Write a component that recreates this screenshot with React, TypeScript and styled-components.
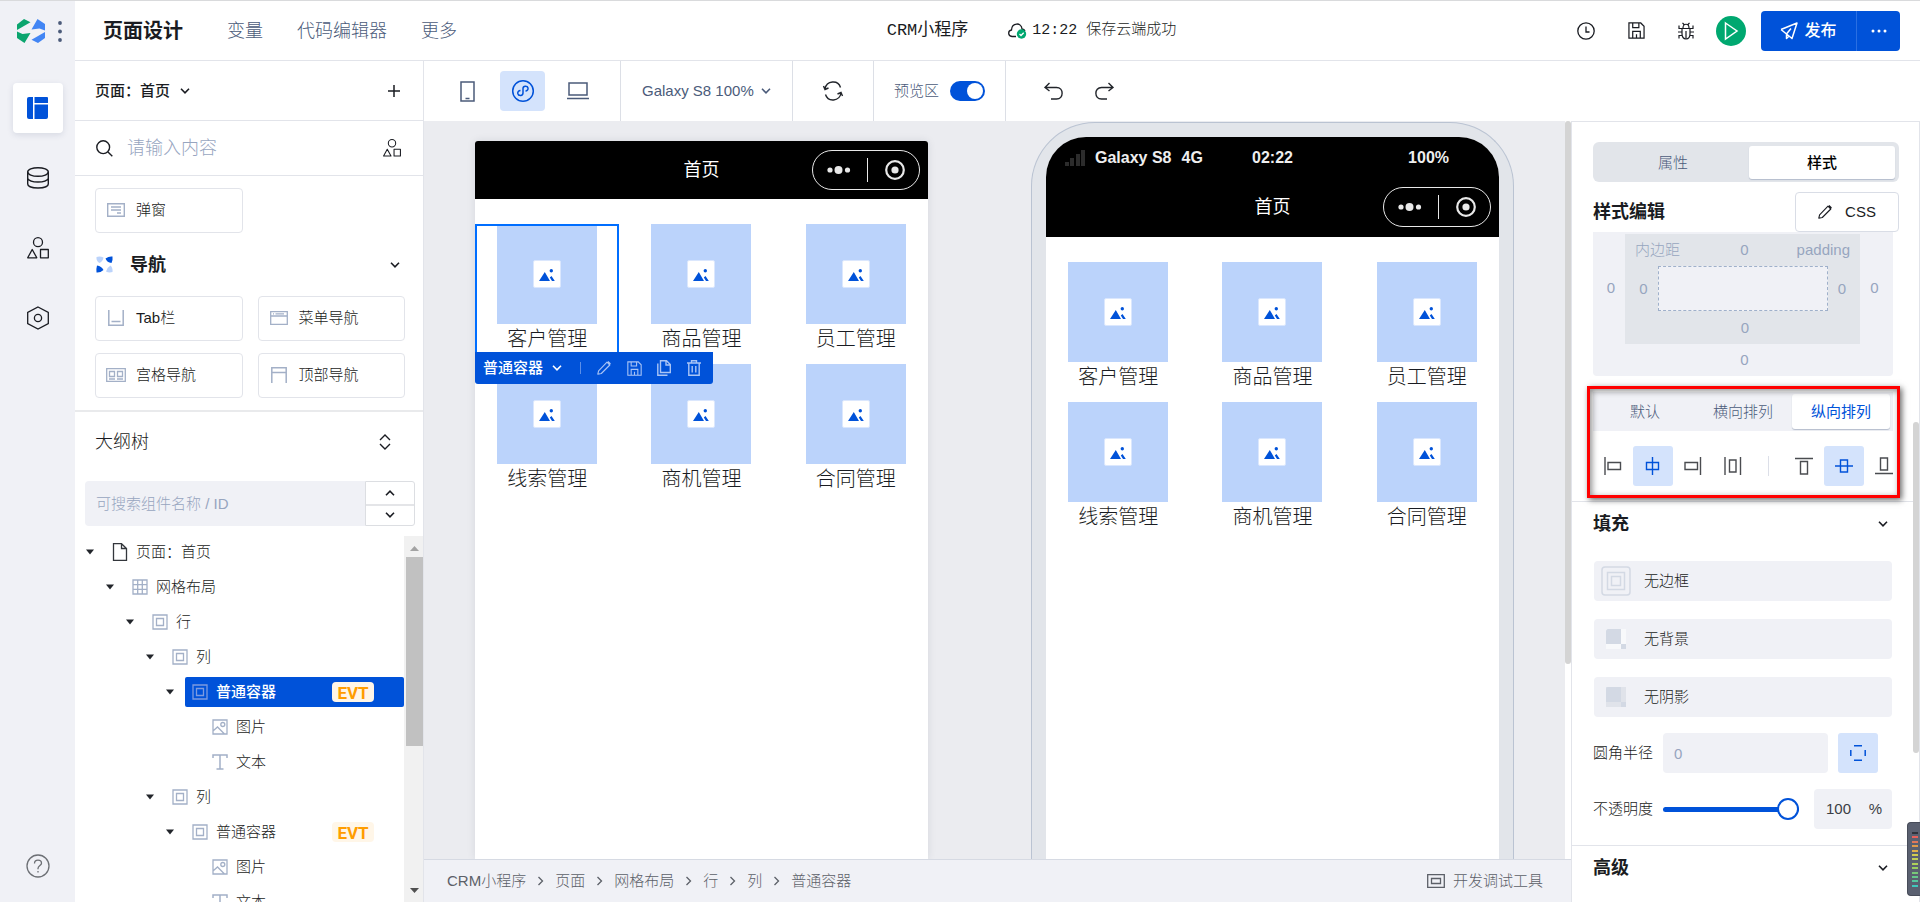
import React from "react";
import styled, { createGlobalStyle, css } from "styled-components";

const c = {
  ink: "#1a1c22",
  slate: "#4b5b7a",
  mute: "#97a5bf",
  iconMute: "#a3b0c7",
  line: "#e2e4ea",
  soft: "#f0f1f6",
  mid: "#e2e5ea",
  canvas: "#ebecf0",
  blue: "#0052d9",
  blueSoft: "#d4e3fc",
  tile: "#bbd3fb",
  green: "#00a870",
};

const GlobalStyle = createGlobalStyle`
  * { box-sizing: border-box; }
  body {
    margin: 0;
    font-family: "Liberation Sans", "Noto Sans CJK SC", sans-serif;
    font-size: 15px;
    line-height: 20px;
    font-weight: 300;
    color: ${c.ink};
    background: #fff;
  }
  button, input, select { font: inherit; color: inherit; margin: 0; }
  button { padding: 0; border: 0; background: none; cursor: pointer; }
  a { color: inherit; text-decoration: none; }
  ul { margin: 0; padding: 0; list-style: none; }
  h1, h2, h3 { margin: 0; font-size: 18px; line-height: 24px; }
`;

/* ---------- icons ---------- */

const Svg = styled.svg`
  display: block;
  flex: none;
  fill: none;
  stroke: currentColor;
  stroke-width: 1.3;
  overflow: visible;
`;

type IconProps = { w?: number; h?: number; sw?: number; children: React.ReactNode };
const Icon = ({ w = 24, h = 24, sw = 1.3, children }: IconProps) => (
  <Svg width={w} height={h} viewBox={`0 0 ${w} ${h}`} style={{ strokeWidth: sw }} aria-hidden="true">
    {children}
  </Svg>
);

const ChevronDown = () => (
  <Icon w={10} h={6} sw={1.6}><path d="M1 .8 5 4.8 9 .8" /></Icon>
);
const ChevronUp = () => (
  <Icon w={10} h={6} sw={1.6}><path d="M1 5.2 5 1.2 9 5.2" /></Icon>
);
const Crumb = () => (
  <Icon w={7} h={10} sw={1.3}><path d="M1.500 1 5.500 5 1.500 9" /></Icon>
);
const Logo = () => (
  <Icon w={28} h={24} sw={0}>
    <path fill="#0aa56e" d="M0 5.500 7 0 13.500 3.200 0 11z" />
    <path fill="#0aa56e" d="M0 12.500 5.500 15 13.500 14 7.500 24 0 19z" />
    <path fill="#4285f4" d="M20.500 0 28 5V11.500L22.500 9.500 14.500 10.500z" />
    <path fill="#4285f4" d="M28 13V19L21 24 14.500 20.800z" />
  </Icon>
);
const PagesIcon = () => (
  <Icon w={21} h={22} sw={0}>
    <path fill={c.blue} d="M2 0H6V22H2Q0 22 0 20V2Q0 0 2 0z" />
    <path fill={c.blue} d="M7.500 0H20Q21 0 21 1V6H7.500zM7.500 7.500H21V20Q21 22 19 22H7.500z" />
  </Icon>
);
const DatabaseIcon = () => (
  <Icon w={22} h={22} sw={1.4}>
    <ellipse cx="11" cy="5" rx="10.300" ry="4.300" />
    <path d="M.7 5V17C.7 19.500 5.500 21 11 21S21.300 19.500 21.300 17V5M.7 11.500C2 14 6 15 11 15S20 14 21.300 11.500" />
  </Icon>
);
const ShapesIcon = ({ size = 22 }: { size?: number }) => (
  <Svg width={size} height={size} viewBox="0 0 22 22" aria-hidden="true">
    <circle cx="11" cy="5.200" r="4.500" />
    <path d="M5.200 12.500 9.800 20.800H.7zM13.500 12.500H21.300V20.800H13.500z" strokeLinejoin="round" />
  </Svg>
);
const HexIcon = () => (
  <Icon w={22} h={24}>
    <path d="M11 1 21.300 6.500V17.500L11 23 .7 17.500V6.500z" />
    <circle cx="11" cy="12" r="3.600" />
  </Icon>
);
const HelpIcon = () => (
  <Icon w={24} h={24}>
    <circle cx="12" cy="12" r="11" />
    <path d="M8.500 9.500C8.500 7.500 10 6.200 12 6.200S15.500 7.500 15.500 9.300C15.500 11.500 12 11.800 12 14.500V15.200M12 17V18.600" />
  </Icon>
);
const SearchIcon = () => (
  <Icon w={17} h={17} sw={1.4}><circle cx="7.200" cy="7.200" r="6.400" /><path d="M12 12 16.300 16.300" /></Icon>
);
const PlusIcon = () => (
  <Icon w={12} h={12} sw={1.5}><path d="M6 0V12M0 6H12" /></Icon>
);
const PencilIcon = ({ size = 14 }: { size?: number }) => (
  <Svg width={size} height={size} viewBox="0 0 14 14" aria-hidden="true">
    <path d="M.8 13.200 1.600 9.800 10 1.200 12.800 4 4.300 12.500zM11 .5 13.500 3" strokeLinejoin="round" strokeWidth="1.100" />
  </Svg>
);
const SaveIcon = ({ size = 18 }: { size?: number }) => (
  <Svg width={size} height={size} viewBox="0 0 18 18" aria-hidden="true">
    <path d="M1 1H13.500L17 4.500V17H1zM5 1V6H11.500V1M5 17V10H13V17M9 13V17" />
  </Svg>
);
const TrashIcon = () => (
  <Icon w={14} h={16} sw={1.4}><path d="M0 3H14M4.500 3V.8H9.500V3M1.800 3V15.200H12.200V3M5.200 6V12.500M8.800 6V12.500" /></Icon>
);
const CopyIcon = () => (
  <Icon w={14} h={16} sw={1.4}><path d="M3.500 .8H9.500L13.300 4.600V12.500H3.500zM9 .8V5H13.300M.8 3.500V15.200H10.500" /></Icon>
);
const PictureGlyph = () => (
  <Icon w={16} h={12} sw={0}>
    <path fill={c.blue} d="M0 12 5.800 3 11 12zM10.800 8.500 12.500 7 15.800 12H13z" />
    <circle cx="12.300" cy="1.700" r="1.700" fill={c.blue} />
  </Icon>
);

const treeIcons = {
  page: <Icon w={16} h={18}><path d="M1.500 .7H9.500L14.500 5.500V17.300H1.500zM9.500 .7V5.500H14.500" /></Icon>,
  grid: <Icon w={16} h={16}><path d="M1 1H15V15H1zM1 5.700H15M1 10.300H15M5.700 1V15M10.300 1V15" /></Icon>,
  box: <Icon w={16} h={16}><path d="M1 1H15V15H1zM4.500 4.500H11.500V11.500H4.500z" /></Icon>,
  image: <Icon w={16} h={16}><path d="M1 1H15V15H1zM1 12 5.500 8 12.500 15" /><circle cx="10.800" cy="5.500" r="2" /></Icon>,
  text: <Icon w={16} h={16} sw={1.5}><path d="M1 4V1H15V4M8 1V15M4.500 15H11.500" /></Icon>,
};

/* ---------- shell ---------- */

const Shell = styled.div`
  display: flex;
  height: 100vh;
  overflow: hidden;
  border-top: 1px solid #d9dadc;
`;
const Rail = styled.nav`
  flex: none;
  width: 75px;
  background: ${c.soft};
  display: flex;
  flex-direction: column;
  align-items: center;
`;
const RailTop = styled.div`
  align-self: stretch;
  height: 82px;
  padding: 18px 0 0 17px;
  display: flex;
  align-items: flex-start;
  gap: 13px;
  color: ${c.slate};
`;
const RailButton = styled.button<{ $active?: boolean }>`
  width: 50px;
  height: 50px;
  margin-bottom: 20px;
  display: grid;
  place-items: center;
  border-radius: 4px;
  ${(p) => p.$active && css`background: #fff; box-shadow: 0 2px 6px rgba(30, 50, 90, 0.12);`}
`;
const RailHelp = styled(RailButton)`
  margin-top: auto;
  margin-bottom: 11px;
  color: #6d7075;
`;
const Main = styled.div`
  flex: 1;
  min-width: 0;
  display: flex;
  flex-direction: column;
`;
const Header = styled.header`
  flex: none;
  height: 60px;
  padding: 0 20px 0 28px;
  border-bottom: 1px solid ${c.line};
  display: grid;
  grid-template-columns: 1fr auto 1fr;
  align-items: center;
`;
const HeaderNav = styled.div`
  display: flex;
  align-items: center;
  gap: 34px;
  font-size: 18px;
  color: ${c.slate};
`;
const PageTitle = styled.h1`
  margin-right: 10px;
  font-size: 20px;
  color: ${c.ink};
`;
const Project = styled.div`
  padding-left: 60px;
  display: flex;
  align-items: center;
  gap: 40px;
  font-family: "Liberation Mono", "Noto Sans CJK SC", monospace;
`;
const ProjectName = styled.strong`
  font-size: 17px;
`;
const SaveState = styled.span`
  display: flex;
  align-items: center;
  gap: 5px;
  font-size: 15px;
`;
const HeaderTools = styled.div`
  display: flex;
  justify-content: flex-end;
  align-items: center;
`;
const ToolButton = styled.button`
  width: 50px;
  height: 40px;
  display: grid;
  place-items: center;
`;
const RunButton = styled.button`
  width: 30px;
  height: 30px;
  margin: 0 15px 0 5px;
  display: grid;
  place-items: center;
  border-radius: 50%;
  background: ${c.green};
  color: #fff;
`;
const Publish = styled.div`
  display: flex;
  height: 40px;
  background: ${c.blue};
  color: #fff;
  border-radius: 4px;
`;
const PublishMain = styled.button`
  width: 96px;
  display: flex;
  align-items: center;
  justify-content: center;
  gap: 6px;
  font-size: 16px;
  font-weight: 500;
  border-right: 1px solid #2a6fe2;
`;
const PublishMore = styled.button`
  width: 43px;
  display: grid;
  place-items: center;
`;

const Body = styled.div`
  flex: 1;
  min-height: 0;
  display: flex;
`;

/* ---------- left panel ---------- */

const LeftPanel = styled.aside`
  flex: none;
  width: 349px;
  border-right: 1px solid ${c.line};
  display: flex;
  flex-direction: column;
`;
const PageBar = styled.div`
  flex: none;
  height: 60px;
  padding: 0 23px 0 20px;
  border-bottom: 1px solid ${c.line};
  display: flex;
  align-items: center;
  justify-content: space-between;
`;
const PagePicker = styled.button`
  display: flex;
  align-items: center;
  gap: 10px;
  font-weight: 500;
`;
const SearchBar = styled.label`
  flex: none;
  height: 55px;
  padding: 0 22px 0 21px;
  border-bottom: 1px solid ${c.line};
  display: flex;
  align-items: center;
  gap: 14px;
`;
const SearchInput = styled.input`
  flex: 1;
  min-width: 0;
  border: 0;
  outline: 0;
  padding: 0;
  background: none;
  font-size: 18px;
  &::placeholder { color: ${c.mute}; opacity: 1; }
`;
const Library = styled.section`
  flex: none;
  height: 236px;
  padding: 12px 18px 0 20px;
  border-bottom: 2px solid #e9eaec;
  overflow: hidden;
`;
const Tiles = styled.div`
  display: grid;
  grid-template-columns: 1fr 1fr;
  gap: 12px 15px;
`;
const Tile = styled.button`
  height: 45px;
  padding: 0 0 2px 10px;
  display: flex;
  align-items: center;
  gap: 10px;
  border: 1px solid ${c.line};
  border-radius: 4px;
`;
const TileIcon = styled.span`
  width: 20px;
  display: grid;
  place-items: center;
  color: ${c.iconMute};
`;
const LibraryHead = styled.div`
  height: 63px;
  padding: 0 5px 0 1px;
  display: flex;
  align-items: center;
  gap: 17px;
  & > :last-child { margin-left: auto; }
`;
const OutlineHead = styled.div`
  flex: none;
  height: 69px;
  padding: 0 32px 9px 20px;
  display: flex;
  align-items: center;
  justify-content: space-between;
`;
const OutlineTitle = styled.h2`
  font-weight: 300;
`;
const OutlineSearch = styled.div`
  flex: none;
  margin: 0 8px 10px 10px;
  display: flex;
  height: 45px;
`;
const OutlineInput = styled.input`
  flex: 1;
  min-width: 0;
  padding: 1px 11px 0;
  border: 0;
  outline: 0;
  background: ${c.soft};
  border-radius: 4px 0 0 4px;
  &::placeholder { color: ${c.mute}; opacity: 1; }
`;
const Stepper = styled.div`
  width: 50px;
  display: grid;
  grid-template-rows: 1fr 1fr;
  border: 1px solid #dcdee2;
  border-radius: 0 3px 3px 0;
`;
const StepButton = styled.button`
  display: grid;
  place-items: center;
  & + & { border-top: 2px solid #e4e5e8; }
`;
const TreeArea = styled.div`
  flex: 1;
  min-height: 0;
  display: flex;
`;
const Tree = styled.ul`
  flex: 1;
  min-width: 0;
  padding-top: 1px;
  overflow: hidden;
`;
const TreeRow = styled.li<{ $level: number }>`
  height: 35px;
  padding-left: ${(p) => 10 + p.$level * 20}px;
  display: flex;
  align-items: flex-start;
`;
const Caret = styled.span`
  flex: none;
  width: 20px;
  height: 30px;
  padding: 12px 0 0 1px;
`;
const TreeNode = styled.button<{ $active?: boolean; $dark?: boolean }>`
  flex: 1;
  min-width: 0;
  height: 30px;
  padding: 0 30px 0 7px;
  display: flex;
  align-items: center;
  gap: 8px;
  border-radius: 2px;
  & > svg { color: ${(p) => (p.$dark ? "#33363c" : c.iconMute)}; }
  ${(p) => p.$active && css`background: ${c.blue}; color: #fff; font-weight: 500; & > svg { color: #7c9be0; }`}
`;
const Badge = styled.span`
  width: 42px;
  height: 20px;
  margin-left: auto;
  border-radius: 4px;
  background: #fff6e8;
  color: #ff9d00;
  font: bold 17px/22px Roboto, sans-serif;
  text-align: center;
`;
const TreeScroll = styled.div`
  width: 19px;
  padding: 0 0 6px 2px;
  background: #f1f1f1;
  display: flex;
  flex-direction: column;
  align-items: center;
`;
const TreeThumb = styled.div`
  align-self: stretch;
  height: 189px;
  margin: 6px 0 auto;
  background: #c1c1c1;
`;

/* ---------- workspace ---------- */

const Workspace = styled.div`
  flex: 1;
  min-width: 0;
  display: flex;
  flex-direction: column;
`;
const Toolbar = styled.div`
  flex: none;
  height: 60px;
  padding-left: 1px;
  display: flex;
  color: ${c.slate};
`;
const ToolGroup = styled.div<{ $gap?: number; $pad: number; $last?: boolean }>`
  padding: 0 ${(p) => p.$pad}px;
  display: flex;
  align-items: center;
  gap: ${(p) => p.$gap ?? 0}px;
  border-right: ${(p) => (p.$last ? "0" : `1px solid #dcdfe6`)};
`;
const DeviceButton = styled.button<{ $active?: boolean }>`
  width: 45px;
  height: 40px;
  display: grid;
  place-items: center;
  border-radius: 4px;
  ${(p) => p.$active && css`background: ${c.blueSoft}; color: ${c.blue};`}
`;
const DeviceSelect = styled.select`
  appearance: none;
  border: 0;
  padding: 0;
  background: none;
`;
const Plain = styled.button`
  width: 20px;
  height: 40px;
  display: grid;
  place-items: center;
  color: #22252b;
`;
const Switch = styled.input`
  appearance: none;
  width: 35px;
  height: 20px;
  padding: 2px;
  border-radius: 10px;
  background: ${c.blue};
  display: flex;
  justify-content: flex-end;
  &::before {
    content: "";
    width: 16px;
    height: 16px;
    border-radius: 50%;
    background: #fff;
  }
`;
const SwitchLabel = styled.label`
  display: flex;
  align-items: center;
  gap: 11px;
`;
const Lower = styled.div`
  flex: 1;
  min-height: 0;
  display: flex;
`;
const Stage = styled.main`
  flex: 1;
  min-width: 0;
  display: flex;
  flex-direction: column;
`;
const CanvasArea = styled.div`
  flex: 1;
  min-height: 0;
  display: flex;
`;
const Canvas = styled.div`
  flex: 1;
  min-width: 0;
  padding: 0 51px;
  display: flex;
  justify-content: space-between;
  align-items: stretch;
  background: ${c.canvas};
  overflow: hidden;
`;
const CanvasScroll = styled.div`
  width: 6px;
`;
const CanvasThumb = styled.div`
  height: 543px;
  border-radius: 3px;
  background: #d4d4d4;
`;
const EditPhone = styled.section`
  width: 453px;
  margin-top: 20px;
  border-radius: 3px 3px 0 0;
  background: #fff;
  box-shadow: 0 0 8px rgba(30, 40, 60, 0.1);
`;
const NavBar = styled.div<{ $tall?: boolean }>`
  height: ${(p) => (p.$tall ? 60 : 58)}px;
  padding: 0 8px;
  display: grid;
  grid-template-columns: 1fr auto 1fr;
  align-items: center;
  background: #000;
  color: #fff;
  border-radius: ${(p) => (p.$tall ? "0" : "3px 3px 0 0")};
`;
const NavTitle = styled.span`
  grid-column: 2;
  font-size: 18px;
  font-weight: 400;
`;
const Capsule = styled.div`
  justify-self: end;
  width: 108px;
  height: 40px;
  padding: 0 14px;
  display: flex;
  align-items: center;
  justify-content: space-between;
  border: 1px solid #e8e8e8;
  border-radius: 20px;
  color: #e8e8e8;
`;
const Cells = styled.div`
  padding-top: 25px;
  display: grid;
  grid-template-columns: repeat(3, 1fr);
  gap: 10px;
`;
const Cell = styled.figure`
  position: relative;
  margin: 0;
  display: flex;
  flex-direction: column;
  align-items: center;
  font-size: 20px;
  line-height: 30px;
`;
const Picture = styled.div`
  width: 100px;
  height: 100px;
  display: grid;
  place-items: center;
  background: ${c.tile};
`;
const PictureChip = styled.span`
  width: 28px;
  height: 28px;
  padding-top: 1px;
  display: grid;
  place-items: center;
  background: #fff;
  border: 1px solid #dbe7fd;
  border-radius: 2px;
`;
const Selection = styled.div`
  position: absolute;
  inset: 0;
  border: 2px solid #006eff;
`;
const QuickBar = styled.div`
  position: absolute;
  z-index: 1;
  top: 128px;
  left: 0;
  height: 32px;
  padding: 0 4px 0 8px;
  display: flex;
  align-items: center;
  background: ${c.blue};
  color: #fff;
  border-radius: 0 0 3px 3px;
  font-size: 15px;
  line-height: 20px;
`;
const QuickName = styled.button`
  display: flex;
  align-items: center;
  gap: 9px;
  white-space: nowrap;
  font-weight: 500;
`;
const QuickRule = styled.span`
  width: 1px;
  height: 12px;
  margin: 0 8px 0 18px;
  background: #5c8fe8;
`;
const QuickButton = styled.button`
  width: 30px;
  height: 32px;
  display: grid;
  place-items: center;
  color: #a9c4f5;
`;
const DeviceFrame = styled.section`
  width: 483px;
  margin-top: 1px;
  padding: 14px 14px 0;
  border: 1px solid #bac3d2;
  border-bottom: 0;
  border-radius: 64px 64px 0 0;
  background: ${c.mid};
`;
const Screen = styled.div`
  height: 100%;
  border-radius: 40px 40px 0 0;
  overflow: hidden;
  background: #fff;
`;
const StatusBar = styled.div`
  height: 40px;
  padding: 2px 50px 0 19px;
  display: grid;
  grid-template-columns: 1fr auto 1fr;
  align-items: center;
  background: #000;
  color: #eee;
  font-size: 16px;
  font-weight: 700;
  & > :last-child { justify-self: end; }
`;
const Carrier = styled.span`
  display: flex;
  align-items: center;
  gap: 10px;
`;
const StatusText = styled.span`
  padding-left: 31px;
`;
const Footer = styled.footer`
  flex: none;
  height: 43px;
  padding: 0 28px 0 23px;
  border-top: 1px solid #d6dae3;
  background: ${c.soft};
  display: flex;
  align-items: center;
  justify-content: space-between;
  color: #5c6068;
`;
const Crumbs = styled.nav`
  display: flex;
  align-items: center;
  gap: 11px;
`;
const DevTools = styled.button`
  display: flex;
  align-items: center;
  gap: 8px;
`;

/* ---------- inspector ---------- */

const Inspector = styled.aside`
  flex: none;
  width: 349px;
  border: 1px solid ${c.line};
  border-bottom: 0;
  display: flex;
`;
const InspectorBody = styled.div`
  flex: 1;
  min-width: 0;
  padding-top: 20px;
`;
const Pad = styled.div`
  padding: 0 14px 0 21px;
`;
const MainTabs = styled.div`
  height: 40px;
  padding: 4px 4px 3px;
  display: grid;
  grid-template-columns: 1fr 146px;
  background: ${c.mid};
  border-radius: 6px;
`;
const Tab = styled.button<{ $active?: boolean; $blue?: boolean }>`
  border-radius: 3px;
  color: ${c.slate};
  ${(p) =>
    p.$active &&
    css`
      background: #fff;
      color: ${p.$blue ? c.blue : "#000"};
      font-weight: ${p.$blue ? 400 : 500};
      box-shadow: 0 1px 1px #b4bccc;
    `}
`;
const EditHead = styled.div`
  margin-top: 10px;
  height: 40px;
  display: flex;
  align-items: center;
  justify-content: space-between;
`;
const CssButton = styled.button`
  width: 104px;
  height: 40px;
  display: flex;
  align-items: center;
  justify-content: center;
  gap: 13px;
  border: 1px solid #d9dde6;
  border-radius: 4px;
  background: #fff;
`;
const MarginBox = styled.div`
  width: 300px;
  height: 144px;
  display: grid;
  grid-template: 112px 32px / 32px 1fr 33px;
  place-items: center;
  background: ${c.soft};
  border-radius: 0 0 4px 4px;
  color: ${c.mute};
`;
const PaddingBox = styled.div`
  align-self: end;
  justify-self: stretch;
  height: 110px;
  display: grid;
  grid-template: 32px 45px 33px / 33px 1fr 32px;
  place-items: center;
  background: ${c.mid};
`;
const PaddingHead = styled.div`
  grid-column: 1 / -1;
  justify-self: stretch;
  padding: 0 10px;
  display: grid;
  grid-template-columns: 1fr auto 1fr;
  & > :last-child { text-align: right; }
`;
const Content = styled.div`
  place-self: stretch;
  border: 1px dashed #9fb0ca;
  background: ${c.soft};
`;
const BoxValue = styled.span<{ $side: "left" | "right" | "bottom" }>`
  ${(p) => (p.$side === "right" ? "padding-right: 4px;" : "padding-left: 4px;")}
  ${(p) => p.$side === "bottom" && "grid-column: 2;"}
`;
const Arrange = styled.div`
  position: relative;
  width: 300px;
  margin-top: 16px;
`;
const ArrangeTabs = styled.div`
  height: 39px;
  padding: 2px 3px;
  display: grid;
  grid-template-columns: repeat(3, 1fr);
  background: ${c.soft};
`;
const AlignRow = styled.div`
  margin-top: 15px;
  display: flex;
  align-items: center;
`;
const AlignButton = styled.button<{ $active?: boolean }>`
  flex: none;
  width: 40px;
  height: 40px;
  display: grid;
  place-items: center;
  border-radius: 3px;
  color: #4a4c50;
  ${(p) => p.$active && css`background: ${c.blueSoft}; color: ${c.blue};`}
`;
const AlignRule = styled.span`
  flex: none;
  width: 1px;
  height: 20px;
  margin: 0 15px;
  background: #dcdfe8;
`;
const Callout = styled.div`
  position: absolute;
  inset: -6px -7px -12px -6px;
  border: 3px solid #f00;
  pointer-events: none;
  box-shadow: 2px 2px 6px rgba(0, 0, 0, 0.6), inset 2px 2px 6px rgba(0, 0, 0, 0.45);
`;
const GroupHead = styled.div<{ $top: number; $h: number }>`
  margin-top: ${(p) => p.$top}px;
  height: ${(p) => p.$h}px;
  padding: 0 25px 0 21px;
  border-top: 1px solid ${c.line};
  display: flex;
  align-items: center;
  justify-content: space-between;
`;
const FillRows = styled.div`
  padding: 16px 21px 0 22px;
  display: grid;
  gap: 18px;
`;
const FillRow = styled.button`
  height: 40px;
  padding-left: 7px;
  display: flex;
  align-items: center;
  gap: 13px;
  background: ${c.soft};
  border-radius: 4px;
`;
const FillIcon = styled.span`
  width: 30px;
  height: 30px;
  display: grid;
  place-items: center;
  color: #d3d9e4;
`;
const Field = styled.div`
  margin-top: 16px;
  padding: 0 21px 0 21px;
  height: 40px;
  display: flex;
  align-items: center;
  gap: 10px;
`;
const RadiusInput = styled.input`
  width: 165px;
  height: 40px;
  padding: 0 11px;
  border: 0;
  border-radius: 4px;
  background: ${c.soft};
  color: ${c.mute};
`;
const Range = styled.input`
  appearance: none;
  width: 136px;
  height: 22px;
  background: none;
  &::-webkit-slider-runnable-track {
    height: 5px;
    border-radius: 3px;
    background: ${c.blue};
  }
  &::-webkit-slider-thumb {
    appearance: none;
    width: 22px;
    height: 22px;
    margin-top: -9px;
    border: 2px solid ${c.blue};
    border-radius: 50%;
    background: #fff;
  }
`;
const Percent = styled.label`
  width: 78px;
  height: 40px;
  margin-left: auto;
  padding: 0 10px 0 12px;
  display: flex;
  align-items: center;
  justify-content: space-between;
  background: ${c.soft};
  border-radius: 4px;
  color: #3b3e45;
`;
const PercentInput = styled.input`
  width: 36px;
  padding: 0;
  border: 0;
  background: none;
`;
const InspectorScroll = styled.div`
  flex: none;
  width: 6px;
  padding-top: 300px;
`;
const InspectorThumb = styled.div`
  height: 331px;
  border-radius: 3px;
  background: #d4d4d4;
`;
const Meter = styled.div`
  position: fixed;
  right: 0;
  bottom: 6px;
  width: 13px;
  height: 74px;
  padding: 9px 2px 8px 4px;
  display: flex;
  flex-direction: column;
  justify-content: space-between;
  background: #5a6070;
  border: 1px solid #474c59;
  border-right: 0;
  border-radius: 4px 0 0 4px;
`;
const MeterBar = styled.span<{ $tone: string }>`
  height: 2px;
  background: ${(p) => p.$tone};
`;

/* ---------- data ---------- */

const modules = ["客户管理", "商品管理", "员工管理", "线索管理", "商机管理", "合同管理"];

type TreeItem = { level: number; icon: keyof typeof treeIcons; label: string; evt?: boolean; active?: boolean };
const tree: TreeItem[] = [
  { level: 0, icon: "page", label: "页面：首页" },
  { level: 1, icon: "grid", label: "网格布局" },
  { level: 2, icon: "box", label: "行" },
  { level: 3, icon: "box", label: "列" },
  { level: 4, icon: "box", label: "普通容器", evt: true, active: true },
  { level: 5, icon: "image", label: "图片" },
  { level: 5, icon: "text", label: "文本" },
  { level: 3, icon: "box", label: "列" },
  { level: 4, icon: "box", label: "普通容器", evt: true },
  { level: 5, icon: "image", label: "图片" },
  { level: 5, icon: "text", label: "文本" },
];

const navTiles = [
  { label: "Tab栏", icon: <Icon w={16} h={16} sw={1.5}><path d="M.8 0V15.200H15.200V0M3.500 11.500H12.500" /></Icon> },
  { label: "菜单导航", icon: <Icon w={18} h={14}><path d="M.7 .7H17.300V13.300H.7zM.7 5H17.300M3 2.800H4M5.500 2.800H14" /></Icon> },
  { label: "宫格导航", icon: <Icon w={20} h={14}><path d="M.7 .7H19.300V13.300H.7zM3.500 3.500H8.500V8.500H3.500zM11.500 3.500H16.500V8.500H11.500zM3 11H9M11 11H17" /></Icon> },
  { label: "顶部导航", icon: <Icon w={16} h={16} sw={1.5}><path d="M.8 16V.8H15.200V16M.8 5.500H15.200" /></Icon> },
];

const crumbs = ["CRM小程序", "页面", "网格布局", "行", "列", "普通容器"];

const alignIcons: React.ReactNode[] = [
  <Icon w={18} h={18} sw={1.4}><path d="M1 0V18M4 5.500H16.500V12.500H4z" /></Icon>,
  <Icon w={18} h={18} sw={1.4}><path d="M8.500 0V18M2.500 5.500H14.500V12.500H2.500z" /></Icon>,
  <Icon w={18} h={18} sw={1.4}><path d="M16.500 0V18M1 5.500H13.500V12.500H1z" /></Icon>,
  <Icon w={18} h={18} sw={1.4}><path d="M1 0V18M16.500 0V18M5.500 3H12V15H5.500z" /></Icon>,
  null,
  <Icon w={18} h={18} sw={1.4}><path d="M0 1.500H18M5.500 4.500H12.500V17H5.500z" /></Icon>,
  <Icon w={18} h={18} sw={1.4}><path d="M0 9H18M5.500 3H12.500V15H5.500z" /></Icon>,
  <Icon w={18} h={18} sw={1.4}><path d="M0 16.500H18M5.500 1H12.500V13H5.500z" /></Icon>,
];
const alignNames = ["左对齐", "水平居中", "右对齐", "水平分布", "", "顶对齐", "垂直居中", "底对齐"];

const meterTones = [
  "#2f333c", "#e8605a", "#e0785a", "#e09a4a", "#e0b04a", "#d2cc50",
  "#c2d056", "#aed05a", "#98ce60", "#78c878", "#66c78a", "#55c79e", "#40c8bc",
];

/* ---------- composed parts ---------- */

const CapsuleMenu = () => (
  <Capsule>
    <Icon w={24} h={8} sw={0}>
      <g fill="currentColor"><circle cx="3" cy="4" r="2.600" /><circle cx="11.500" cy="4" r="4" /><circle cx="20.500" cy="4" r="2.600" /></g>
    </Icon>
    <Icon w={1} h={24} sw={1}><path d="M-.5 0V24" /></Icon>
    <Icon w={20} h={20} sw={2.2}><circle cx="10" cy="10" r="8.800" /><circle cx="10" cy="10" r="3.600" fill="currentColor" stroke="none" /></Icon>
  </Capsule>
);

const ModuleGrid = ({ editable }: { editable?: boolean }) => (
  <Cells>
    {modules.map((name, i) => (
      <Cell key={name}>
        <Picture><PictureChip><PictureGlyph /></PictureChip></Picture>
        <figcaption>{name}</figcaption>
        {editable && i === 0 && (
          <>
            <Selection />
            <QuickBar>
              <QuickName>普通容器<ChevronDown /></QuickName>
              <QuickRule />
              <QuickButton aria-label="编辑"><PencilIcon /></QuickButton>
              <QuickButton aria-label="保存"><SaveIcon size={15} /></QuickButton>
              <QuickButton aria-label="复制"><CopyIcon /></QuickButton>
              <QuickButton aria-label="删除"><TrashIcon /></QuickButton>
            </QuickBar>
          </>
        )}
      </Cell>
    ))}
  </Cells>
);

const ComponentTile = ({ label, icon }: { label?: string; icon?: React.ReactNode }) => (
  <Tile><TileIcon>{icon}</TileIcon>{label}</Tile>
);

export default function App() {
  return (
    <>
      <GlobalStyle />
      <Shell>
        <Rail>
          <RailTop>
            <Logo />
            <Icon w={4} h={22} sw={0}>
              <g fill="currentColor"><circle cx="2" cy="4" r="1.900" /><circle cx="2" cy="12.500" r="1.900" /><circle cx="2" cy="21" r="1.900" /></g>
            </Icon>
          </RailTop>
          <RailButton $active aria-label="页面设计"><PagesIcon /></RailButton>
          <RailButton aria-label="数据源"><DatabaseIcon /></RailButton>
          <RailButton aria-label="组件"><ShapesIcon /></RailButton>
          <RailButton aria-label="设置"><HexIcon /></RailButton>
          <RailHelp aria-label="帮助"><HelpIcon /></RailHelp>
        </Rail>

        <Main>
          <Header>
            <HeaderNav>
              <PageTitle>页面设计</PageTitle>
              <a href="#variables">变量</a>
              <a href="#code">代码编辑器</a>
              <a href="#more">更多</a>
            </HeaderNav>
            <Project>
              <ProjectName>CRM小程序</ProjectName>
              <SaveState>
                <Icon w={19} h={16} sw={1.3}>
                  <path d="M8 13.500H4C-.5 13-.2 7.500 3.500 7 3.800-.8 13.500-.8 14 6 15.500 6.300 16.500 7 17 8" />
                  <circle cx="13.500" cy="11" r="4.700" fill={c.green} stroke="none" />
                  <path d="M11.500 11 13 12.500 15.700 9.700" stroke="#fff" />
                </Icon>
                12:22 保存云端成功
              </SaveState>
            </Project>
            <HeaderTools>
              <ToolButton aria-label="历史"><Icon w={18} h={18}><circle cx="9" cy="9" r="8.200" /><path d="M9 4.500V10H12.500" /></Icon></ToolButton>
              <ToolButton aria-label="保存"><SaveIcon size={17} /></ToolButton>
              <ToolButton aria-label="调试">
                <Icon w={16} h={18} sw={1.2}>
                  <path d="M4 6.500H12V12C12 18.500 4 18.500 4 12zM5 6C5 1 11 1 11 6M8 9V16M0 10H4M12 10H16M1 3.500V6.500H4M15 3.500V6.500H12M1 16.500V13.500H4M15 16.500V13.500H12M4.500 .8 6 2.500M11.500 .8 10 2.500" />
                </Icon>
              </ToolButton>
              <RunButton aria-label="预览"><Icon w={14} h={18} sw={1.5}><path d="M1.500 1 13 9 1.500 17z" /></Icon></RunButton>
              <Publish>
                <PublishMain>
                  <Icon w={18} h={18} sw={1.5}><path d="M1 7.500 17 1 12 16.500 6.500 12 11 6.500M6.500 12V16.500L9 14M1 7.500 6.500 12" strokeLinejoin="round" /></Icon>
                  发布
                </PublishMain>
                <PublishMore aria-label="更多发布选项">
                  <Icon w={16} h={4} sw={0}><g fill="currentColor"><circle cx="2" cy="2" r="1.500" /><circle cx="8" cy="2" r="1.500" /><circle cx="14" cy="2" r="1.500" /></g></Icon>
                </PublishMore>
              </Publish>
            </HeaderTools>
          </Header>

          <Body>
            <LeftPanel>
              <PageBar>
                <PagePicker>页面：首页<ChevronDown /></PagePicker>
                <button aria-label="新建页面"><PlusIcon /></button>
              </PageBar>
              <SearchBar>
                <SearchIcon />
                <SearchInput placeholder="请输入内容" aria-label="搜索组件" />
                <ShapesIcon size={18} />
              </SearchBar>
              <Library>
                <Tiles>
                  <ComponentTile
                    label="弹窗"
                    icon={<Icon w={18} h={14} sw={1.4}><path d="M.7 .7H17.300V13.300H.7zM4 4H14M4 7H14M10 10H14" /></Icon>}
                  />
                </Tiles>
                <LibraryHead>
                  <Icon w={17} h={17} sw={0}>
                    <path fill={c.tile} d="M.5 1Q4 0 7.500 1.500Q7 5 3.500 7Q0 5 .5 1zM10 15.500Q11 11.500 14.500 9.500Q17 12 16.500 16Q13 17 10 15.500z" />
                    <path fill={c.blue} d="M9.500 2.500Q13 0 16.500 .5Q17 4 15.500 7Q11 6.500 9.500 2.500zM1 9.500Q5.500 10 7.500 14Q4 17 .5 16.500Q0 13 1 9.500z" />
                  </Icon>
                  <h2>导航</h2>
                  <ChevronDown />
                </LibraryHead>
                <Tiles>
                  {navTiles.map((t) => <ComponentTile key={t.label} {...t} />)}
                  <ComponentTile />
                  <ComponentTile />
                </Tiles>
              </Library>
              <OutlineHead>
                <OutlineTitle>大纲树</OutlineTitle>
                <button aria-label="展开或收起">
                  <Icon w={12} h={16} sw={1.4}><path d="M1 6 6 1 11 6M1 10 6 15 11 10" /></Icon>
                </button>
              </OutlineHead>
              <OutlineSearch>
                <OutlineInput placeholder="可搜索组件名称 / ID" aria-label="可搜索组件名称 / ID" />
                <Stepper>
                  <StepButton aria-label="上一个"><ChevronUp /></StepButton>
                  <StepButton aria-label="下一个"><ChevronDown /></StepButton>
                </Stepper>
              </OutlineSearch>
              <TreeArea>
                <Tree>
                  {tree.map((n, i) => (
                    <TreeRow key={i} $level={n.level}>
                      <Caret>
                        {n.level < 5 && <Icon w={8} h={6} sw={0}><path d="M0 .5H8L4 5.500z" fill="#22252b" /></Icon>}
                      </Caret>
                      <TreeNode $active={n.active} $dark={n.icon === "page"}>
                        {treeIcons[n.icon]}
                        {n.label}
                        {n.evt && <Badge>EVT</Badge>}
                      </TreeNode>
                    </TreeRow>
                  ))}
                </Tree>
                <TreeScroll>
                  <Icon w={9} h={15} sw={0}><path d="M0 15H9L4.500 10z" fill="#a3a3a3" /></Icon>
                  <TreeThumb />
                  <Icon w={9} h={8} sw={0}><path d="M0 0H9L4.500 5z" fill="#505050" /></Icon>
                </TreeScroll>
              </TreeArea>
            </LeftPanel>

            <Workspace>
              <Toolbar>
                <ToolGroup $pad={20} $gap={10}>
                  <DeviceButton aria-label="手机">
                    <Icon w={15} h={21} sw={1.5}><path d="M1 1H14V20H1zM5.500 17.500H9.500" /></Icon>
                  </DeviceButton>
                  <DeviceButton $active aria-label="小程序">
                    <Icon w={22} h={22} sw={1.5}>
                      <circle cx="11" cy="11" r="10.300" />
                      <path d="M8.500 10.500C6.500 10.500 5.500 12 5.800 13.500C6.500 16.500 11 16 11 13V8.500C11 5.500 15.500 5.500 16 8C16.300 9.500 15.200 11 13.500 11" />
                    </Icon>
                  </DeviceButton>
                  <DeviceButton aria-label="电脑">
                    <Icon w={22} h={18} sw={1.5}><path d="M2 1H20V13H2zM0 16.500H22" /></Icon>
                  </DeviceButton>
                </ToolGroup>
                <ToolGroup $pad={21} $gap={7}>
                  <DeviceSelect aria-label="设备"><option>Galaxy S8 100%</option></DeviceSelect>
                  <ChevronDown />
                </ToolGroup>
                <ToolGroup $pad={30}>
                  <Plain aria-label="刷新">
                    <Icon w={20} h={20} sw={1.4}>
                      <path d="M2 8C3.500-.5 15-1.500 17.500 6.500M18 12C16.500 20.500 5 21.500 2.500 13.500M.5 5 2 8.500 5.500 7M19.500 15 18 11.500 14.500 13" />
                    </Icon>
                  </Plain>
                </ToolGroup>
                <ToolGroup $pad={20}>
                  <SwitchLabel>预览区<Switch type="checkbox" role="switch" defaultChecked /></SwitchLabel>
                </ToolGroup>
                <ToolGroup $pad={37} $gap={31} $last>
                  <Plain aria-label="撤销">
                    <Icon w={19} h={18} sw={1.4}><path d="M5.500 1 1 5.500 5.500 9M1 5.500H12.500C20 5.500 20 17 12.500 17H7" /></Icon>
                  </Plain>
                  <Plain aria-label="重做">
                    <Icon w={19} h={18} sw={1.4}><path d="M13.500 1 18 5.500 13.500 9M18 5.500H6.500C-1 5.500-1 17 6.500 17H12" /></Icon>
                  </Plain>
                </ToolGroup>
              </Toolbar>

              <Lower>
                <Stage>
                  <CanvasArea>
                    <Canvas>
                      <EditPhone>
                        <NavBar><NavTitle>首页</NavTitle><CapsuleMenu /></NavBar>
                        <ModuleGrid editable />
                      </EditPhone>
                      <DeviceFrame>
                        <Screen>
                          <StatusBar>
                            <Carrier>
                              <Icon w={20} h={16} sw={0}>
                                <path fill="#2c2c2c" d="M0 12H4V16H0zM5 8H9V16H5zM11 4H15V16H11zM16 0H20V16H16z" />
                              </Icon>
                              <span>Galaxy S8</span>
                              <span>4G</span>
                            </Carrier>
                            <StatusText>02:22</StatusText>
                            <span>100%</span>
                          </StatusBar>
                          <NavBar $tall><NavTitle>首页</NavTitle><CapsuleMenu /></NavBar>
                          <ModuleGrid />
                        </Screen>
                      </DeviceFrame>
                    </Canvas>
                    <CanvasScroll><CanvasThumb /></CanvasScroll>
                  </CanvasArea>
                  <Footer>
                    <Crumbs aria-label="路径">
                      {crumbs.map((name, i) => (
                        <React.Fragment key={name}>
                          {i > 0 && <Crumb />}
                          <a href={`#crumb-${i}`}>{name}</a>
                        </React.Fragment>
                      ))}
                    </Crumbs>
                    <DevTools>
                      <Icon w={18} h={14}><path d="M.7 .7H17.300V13.300H.7zM4.500 4.500H13.500V9.500H4.500z" /></Icon>
                      开发调试工具
                    </DevTools>
                  </Footer>
                </Stage>

                <Inspector>
                  <InspectorBody>
                    <Pad>
                      <MainTabs>
                        <Tab>属性</Tab>
                        <Tab $active>样式</Tab>
                      </MainTabs>
                      <EditHead>
                        <h2>样式编辑</h2>
                        <CssButton><PencilIcon />CSS</CssButton>
                      </EditHead>
                      <MarginBox>
                        <BoxValue $side="left">0</BoxValue>
                        <PaddingBox>
                          <PaddingHead><span>内边距</span><BoxValue $side="left">0</BoxValue><span>padding</span></PaddingHead>
                          <BoxValue $side="left">0</BoxValue>
                          <Content />
                          <BoxValue $side="right">0</BoxValue>
                          <BoxValue $side="bottom">0</BoxValue>
                        </PaddingBox>
                        <BoxValue $side="right">0</BoxValue>
                        <BoxValue $side="bottom">0</BoxValue>
                      </MarginBox>
                      <Arrange>
                        <ArrangeTabs>
                          <Tab>默认</Tab>
                          <Tab>横向排列</Tab>
                          <Tab $active $blue>纵向排列</Tab>
                        </ArrangeTabs>
                        <AlignRow>
                          {alignIcons.map((icon, i) =>
                            icon ? (
                              <AlignButton key={i} $active={i === 1 || i === 6} aria-label={alignNames[i]}>{icon}</AlignButton>
                            ) : (
                              <AlignRule key={i} />
                            )
                          )}
                        </AlignRow>
                        <Callout />
                      </Arrange>
                    </Pad>
                    <GroupHead $top={15} $h={44}><h2>填充</h2><ChevronDown /></GroupHead>
                    <FillRows>
                      <FillRow>
                        <FillIcon><Icon w={30} h={30} sw={1.5}><rect x="1" y="1" width="28" height="28" rx="3" /><path d="M6.500 6.500H23.500V23.500H6.500zM10.500 10.500H19.500V19.500H10.500z" /></Icon></FillIcon>
                        无边框
                      </FillRow>
                      <FillRow>
                        <FillIcon><Icon w={20} h={20} sw={0}><path fill="#f8f9fb" d="M0 0H20V20H0z" /><path fill="#d3d9e4" d="M2 0H15V15H0V2Q0 0 2 0zM15 15H20V20H15z" /></Icon></FillIcon>
                        无背景
                      </FillRow>
                      <FillRow>
                        <FillIcon><Icon w={20} h={20} sw={0}><path fill="#e0e3ea" d="M0 0H20V20H0z" /><path fill="#d3d9e4" d="M2 0H15V15H0V2Q0 0 2 0zM15 15H20V20H15z" /></Icon></FillIcon>
                        无阴影
                      </FillRow>
                    </FillRows>
                    <Field>
                      <label htmlFor="radius">圆角半径</label>
                      <RadiusInput id="radius" defaultValue="0" />
                      <AlignButton $active aria-label="统一圆角">
                        <Icon w={16} h={16} sw={1.5}><path d="M4 .8H12M4 15.200H12M.8 5V11M15.200 5V11" /></Icon>
                      </AlignButton>
                    </Field>
                    <Field>
                      <label htmlFor="opacity">不透明度</label>
                      <Range id="opacity" type="range" min={0} max={100} defaultValue={100} />
                      <Percent><PercentInput defaultValue="100" />%</Percent>
                    </Field>
                    <GroupHead $top={16} $h={44}><h2>高级</h2><ChevronDown /></GroupHead>
                  </InspectorBody>
                  <InspectorScroll><InspectorThumb /></InspectorScroll>
                </Inspector>
              </Lower>
            </Workspace>
          </Body>
        </Main>
        <Meter aria-hidden="true">
          {meterTones.map((tone, i) => <MeterBar key={i} $tone={tone} />)}
        </Meter>
      </Shell>
    </>
  );
}
